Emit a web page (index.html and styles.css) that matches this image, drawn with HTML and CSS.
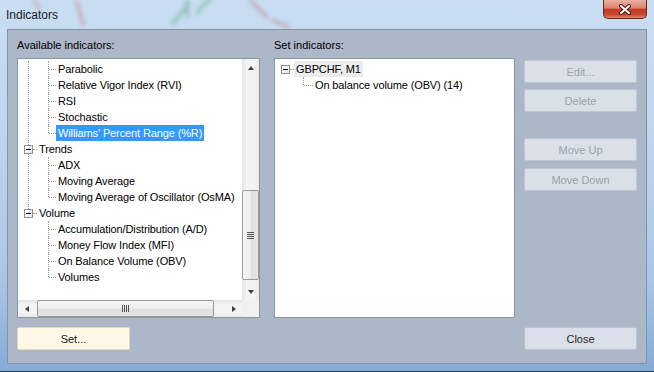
FILE: index.html
```html
<!DOCTYPE html>
<html>
<head>
<title>Indicators</title>
<link rel="stylesheet" href="styles.css">
</head>
<body>
<div class="window">
  <div class="titlebar">
    <svg class="glass" width="654" height="29" viewBox="0 0 654 29">
      <defs><filter id="blur"><feGaussianBlur stdDeviation="2.2"/></filter></defs>
      <g filter="url(#blur)" fill="none" stroke-width="3.5" opacity="0.38">
        <path d="M34 0 L40 9" stroke="#c46b6b"/>
        <path d="M76 0 Q80 14 84 26" stroke="#bf5f5f"/>
        <path d="M172 24 L184 10 L190 2 M196 14 L206 2 L212 0 M186 0 L188 18" stroke="#3f9468"/>
        <path d="M250 0 L262 12 L268 18 M272 20 L290 28" stroke="#b75c5c"/>
      </g>
    </svg>
    <span class="title">Indicators</span>
    <button class="close-x">
      <svg width="14" height="11" viewBox="0 0 14 11">
        <path d="M3 2 L11 9 M11 2 L3 9" stroke="#4b1a12" stroke-width="4" stroke-linecap="round"/>
        <path d="M3 2 L11 9 M11 2 L3 9" stroke="#fff" stroke-width="2" stroke-linecap="round"/>
      </svg>
    </button>
  </div>

  <div class="client">
    <div class="panes">
      <div class="pane pane-available">
        <div class="caption">Available indicators:</div>
        <div class="listbox">
          <div class="view">
            <ul class="tree">
              <li class="node">
                <ul>
                  <li><div class="row"><span class="dash"></span><span class="label">Parabolic</span></div></li>
                  <li><div class="row"><span class="dash"></span><span class="label">Relative Vigor Index (RVI)</span></div></li>
                  <li><div class="row"><span class="dash"></span><span class="label">RSI</span></div></li>
                  <li><div class="row"><span class="dash"></span><span class="label">Stochastic</span></div></li>
                  <li class="last"><div class="row"><span class="dash"></span><span class="label selected">Williams' Percent Range (%R)</span></div></li>
                </ul>
              </li>
              <li class="node">
                <div class="row"><span class="toggle"></span><span class="dash"></span><span class="label">Trends</span></div>
                <ul>
                  <li><div class="row"><span class="dash"></span><span class="label">ADX</span></div></li>
                  <li><div class="row"><span class="dash"></span><span class="label">Moving Average</span></div></li>
                  <li class="last"><div class="row"><span class="dash"></span><span class="label">Moving Average of Oscillator (OsMA)</span></div></li>
                </ul>
              </li>
              <li class="node last">
                <div class="row"><span class="toggle"></span><span class="dash"></span><span class="label">Volume</span></div>
                <ul>
                  <li><div class="row"><span class="dash"></span><span class="label">Accumulation/Distribution (A/D)</span></div></li>
                  <li><div class="row"><span class="dash"></span><span class="label">Money Flow Index (MFI)</span></div></li>
                  <li><div class="row"><span class="dash"></span><span class="label">On Balance Volume (OBV)</span></div></li>
                  <li class="last"><div class="row"><span class="dash"></span><span class="label">Volumes</span></div></li>
                </ul>
              </li>
            </ul>
          </div>
          <div class="vscroll">
            <div class="sb-btn"><span class="arrow arrow-up"></span></div>
            <div class="vthumb"><span class="grip grip-v"></span></div>
            <div class="sb-btn sb-end"><span class="arrow arrow-down"></span></div>
          </div>
          <div class="hscroll">
            <div class="sb-btn"><span class="arrow arrow-left"></span></div>
            <div class="hthumb"><span class="grip grip-h"></span></div>
            <div class="sb-btn sb-end"><span class="arrow arrow-right"></span></div>
          </div>
          <div class="corner"></div>
        </div>
      </div>

      <div class="pane pane-set">
        <div class="caption">Set indicators:</div>
        <div class="listbox listbox-plain">
          <div class="view">
            <ul class="tree set-tree">
              <li class="node root">
                <div class="row"><span class="toggle"></span><span class="dash"></span><span class="label inactive">GBPCHF, M1</span></div>
                <ul>
                  <li class="last"><div class="row"><span class="dash"></span><span class="label">On balance volume (OBV) (14)</span></div></li>
                </ul>
              </li>
            </ul>
          </div>
        </div>
      </div>

      <div class="side-buttons">
        <button class="btn btn-disabled">Edit...</button>
        <button class="btn btn-disabled btn-delete">Delete</button>
        <button class="btn btn-disabled btn-up">Move Up</button>
        <button class="btn btn-disabled btn-down">Move Down</button>
      </div>
    </div>

    <div class="footer">
      <button class="btn btn-set">Set...</button>
      <button class="btn btn-close">Close</button>
    </div>
  </div>
</div>
</body>
</html>
```

FILE: styles.css
```css
body {
  margin: 0;
  font-family: "Liberation Sans", Arial, sans-serif;
  font-size: 11px;
  color: #000;
}

.window {
  width: 654px;
  height: 372px;
  box-sizing: border-box;
  display: flex;
  flex-direction: column;
  position: relative;
  overflow: hidden;
  background: linear-gradient(to bottom, #c9def2 0%, #bcd5ee 40%, #a9c6e6 75%, #86abd6 100%);
  border-bottom: 1px solid #2f3f52;
}

/* title bar */

.titlebar {
  height: 29px;
  display: flex;
  align-items: flex-start;
  position: relative;
}

.glass {
  position: absolute;
  left: 0;
  top: 0;
}

.title {
  position: relative;
  margin: 8px 0 0 6px;
  font-size: 12px;
  color: #1b1b1b;
}

.close-x {
  position: relative;
  margin-left: auto;
  margin-right: 7px;
  width: 44px;
  height: 19px;
  padding: 0;
  border: 1px solid #6a281c;
  border-top: none;
  border-radius: 0 0 5px 5px;
  background: linear-gradient(to bottom, #eab0a2 0%, #d9826f 45%, #c23a22 52%, #c9472e 80%, #e0836a 100%);
  display: flex;
  align-items: center;
  justify-content: center;
}

/* client area */

.client {
  flex: 1;
  margin: 0 7px 7px 7px;
  border: 1px solid #8393a8;
  background: #acb7c8;
  padding: 9px 9px 0 9px;
  display: flex;
  flex-direction: column;
}

.panes {
  display: flex;
}

.pane-available {
  width: 243px;
}

.pane-set {
  width: 241px;
  margin-left: 14px;
}

.caption {
  height: 19px;
  line-height: 13px;
}

.listbox {
  height: 260px;
  box-sizing: border-box;
  border: 1px solid #8c95a2;
  background: #fff;
  display: grid;
  grid-template-columns: 1fr 17px;
  grid-template-rows: 1fr 17px;
}

.listbox-plain {
  display: block;
}

.view {
  overflow: hidden;
  padding-top: 2px;
}

/* tree */

.tree,
.tree ul {
  list-style: none;
  margin: 0;
  padding: 0;
}

.tree li {
  position: relative;
}

.tree li::before {
  content: "";
  position: absolute;
  left: 10px;
  top: 0;
  bottom: 0;
  border-left: 1px dotted #a0a0a0;
}

.tree li.last::before {
  bottom: auto;
  height: 8px;
}

.tree .root::before {
  display: none;
}

.tree ul {
  margin-left: 20px;
}

.row {
  height: 16px;
  display: flex;
  align-items: center;
  white-space: nowrap;
  position: relative;
}

.node > .row {
  padding-left: 6px;
}

.tree ul .row {
  padding-left: 11px;
}

.toggle {
  width: 9px;
  height: 9px;
  box-sizing: border-box;
  border: 1px solid #919191;
  background: linear-gradient(to bottom right, #fff, #e6e6e6);
  position: relative;
  flex: none;
}

.toggle::after {
  content: "";
  position: absolute;
  left: 1px;
  top: 3px;
  width: 5px;
  height: 1px;
  background: #000;
}

.dash {
  width: 4px;
  height: 0;
  border-top: 1px dotted #a0a0a0;
  flex: none;
}

.tree ul .dash {
  width: 7px;
}

.label {
  padding: 0 2px;
  line-height: 16px;
  letter-spacing: -0.12px;
}

.label.selected {
  background: #3399ff;
  color: #fff;
}

.label.inactive {
  background: #ececec;
}

.set-tree ul {
  margin-left: 18px;
}

.set-tree ul .dash {
  width: 9px;
}

/* scrollbars */

.vscroll {
  display: flex;
  flex-direction: column;
  background: linear-gradient(to right, #e3e3e3, #f3f3f3 25%, #f3f3f3 75%, #e8e8e8);
}

.hscroll {
  display: flex;
  background: linear-gradient(to bottom, #e3e3e3, #f3f3f3 25%, #f3f3f3 75%, #e8e8e8);
}

.sb-btn {
  width: 17px;
  height: 17px;
  flex: none;
  display: flex;
  align-items: center;
  justify-content: center;
}

.sb-end {
  margin-top: auto;
}

.hscroll .sb-end {
  margin-top: 0;
  margin-left: auto;
}

.corner {
  background: #f0f0f0;
}

.arrow {
  width: 0;
  height: 0;
}

.arrow-up {
  border-left: 3px solid transparent;
  border-right: 3px solid transparent;
  border-bottom: 4px solid #404040;
}

.arrow-down {
  border-left: 3px solid transparent;
  border-right: 3px solid transparent;
  border-top: 4px solid #404040;
}

.arrow-left {
  border-top: 3px solid transparent;
  border-bottom: 3px solid transparent;
  border-right: 4px solid #404040;
}

.arrow-right {
  border-top: 3px solid transparent;
  border-bottom: 3px solid transparent;
  border-left: 4px solid #404040;
}

.vthumb {
  margin: 114px 0 0 0;
  height: 90px;
  box-sizing: border-box;
  border: 1px solid #999;
  border-radius: 2px;
  background: linear-gradient(to right, #f7f7f7, #ececec 50%, #dedede 51%, #e6e6e6);
  display: flex;
  align-items: center;
  justify-content: center;
}

.hthumb {
  margin: 0 0 0 2px;
  width: 177px;
  box-sizing: border-box;
  border: 1px solid #999;
  border-radius: 2px;
  background: linear-gradient(to bottom, #f7f7f7, #ececec 50%, #dedede 51%, #e6e6e6);
  display: flex;
  align-items: center;
  justify-content: center;
}

.grip-v {
  width: 7px;
  height: 7px;
  background: repeating-linear-gradient(to bottom, #555 0 1px, transparent 1px 2px);
}

.grip-h {
  width: 7px;
  height: 7px;
  background: repeating-linear-gradient(to right, #555 0 1px, transparent 1px 2px);
}

/* buttons */

.side-buttons {
  width: 113px;
  margin-left: 9px;
  padding-top: 21px;
  display: flex;
  flex-direction: column;
}

.btn {
  width: 113px;
  height: 23px;
  box-sizing: border-box;
  padding: 0;
  font-family: "Liberation Sans", Arial, sans-serif;
  font-size: 11px;
  border: 1px solid;
  border-radius: 2px;
}

.btn-disabled {
  background: #d9e0e8;
  border-color: #bfc7d1;
  color: #9aa2ac;
}

.btn-delete {
  margin-top: 6px;
}

.btn-up {
  margin-top: 26px;
}

.btn-down {
  margin-top: 7px;
}

.footer {
  display: flex;
  justify-content: space-between;
  margin-top: 9px;
}

.btn-set {
  background: #fff8e7;
  border-color: #e2d9c4;
  color: #1a1a1a;
}

.btn-close {
  background: #d8dfe8;
  border-color: #b9c2cd;
  color: #2a2a2a;
}
```
